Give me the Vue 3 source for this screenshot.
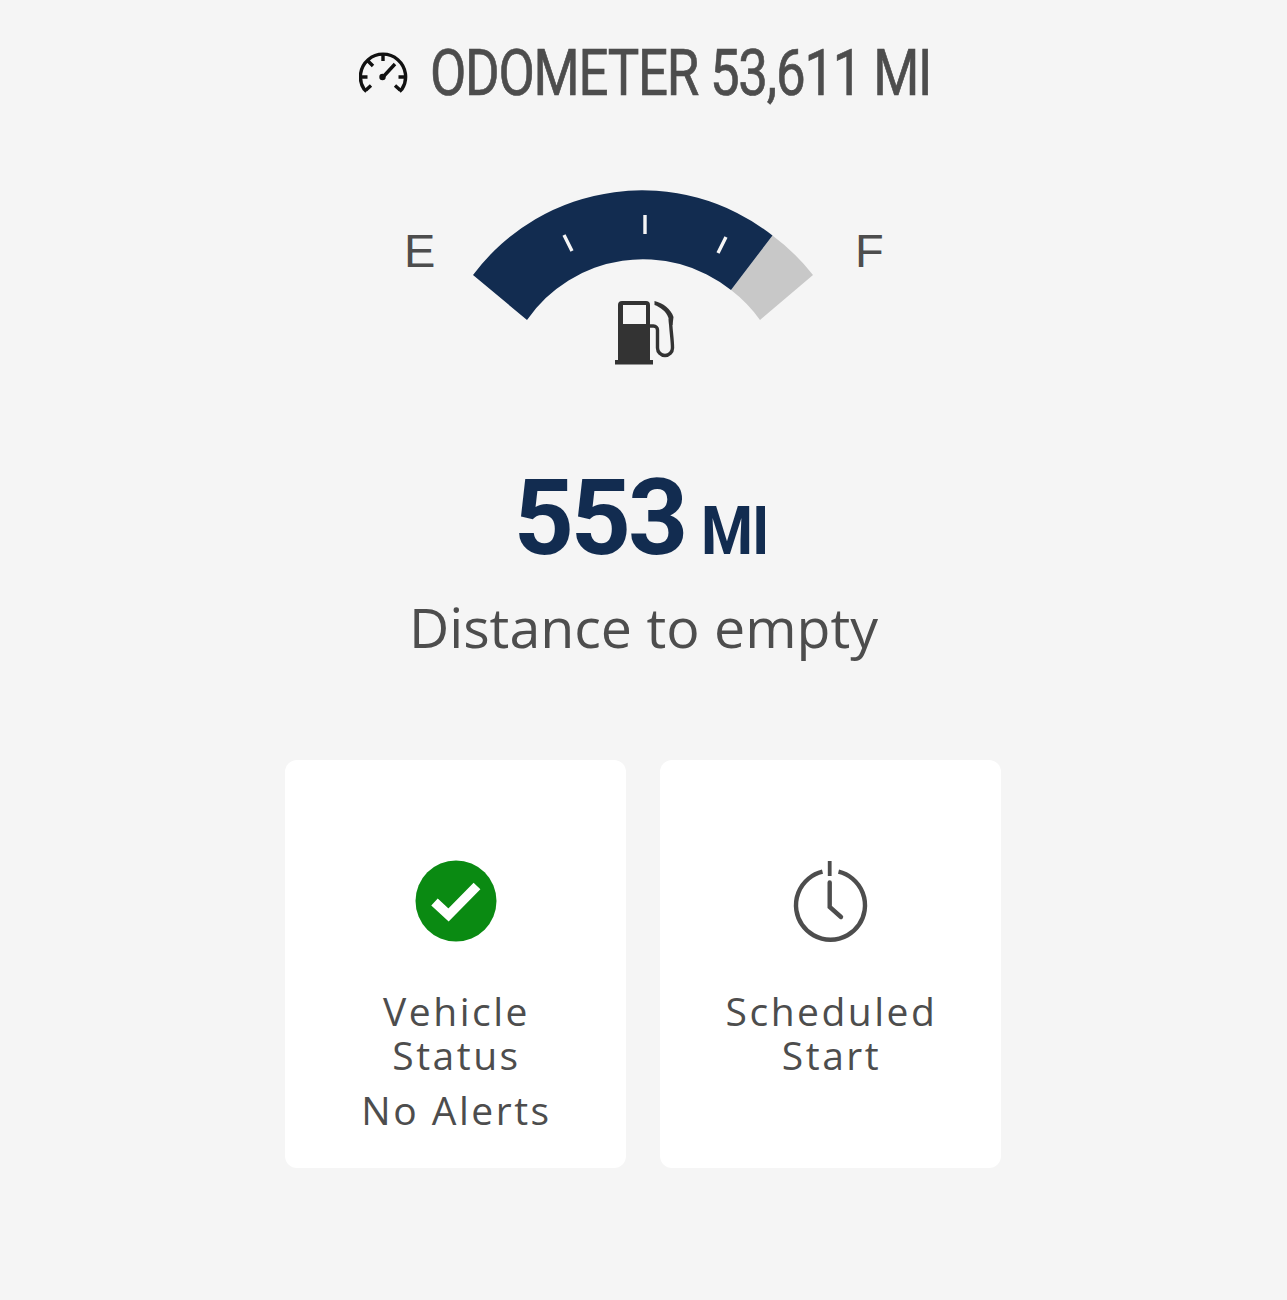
<template>
  <div class="page">
    <div class="odometer">
      <svg class="odo-icon" viewBox="1 0 50 44" width="50" height="44" fill="none" stroke="#111" stroke-width="3.4">
        <path d="M8.5 40.5 L6 38 A22.6 22.6 0 1 1 44 38 L41.5 40.5" stroke-linejoin="round" />
        <path d="M25 3v7M10 10l5 5M2.5 26h7M40.5 26h7M25 26L37 13" />
        <path d="M8 39l5-4.5M42 39l-5-4.5" />
        <circle cx="24.5" cy="26" r="3.2" fill="#111" stroke="none" />
      </svg>
      <span class="odo-text">ODOMETER 53,611 MI</span>
    </div>

    <div class="gauge-row">
      <span class="gauge-label left">E</span>
      <svg class="gauge" viewBox="0 0 340 176" width="340" height="176">
        <path d="M299.5 46.5 A211 211 0 0 1 340 86 L287 131 A141 141 0 0 0 258 101 Z" fill="#c8c8c8" />
        <path d="M0 86 A211 211 0 0 1 299.5 46.5 L258 101 A141 141 0 0 0 54 131 Z" fill="#122c50" />
        <path d="M172 26v19M91 46l8 16M253 48l-8 16" stroke="#f5f5f5" stroke-width="3.4" fill="none" />
        <!-- fuel pump -->
        <path fill="#333" fill-rule="evenodd" d="M149 112 H173 A4 4 0 0 1 177 116 V171 H180 V175.500 H142 V171 H145 V116 A4 4 0 0 1 149 112 Z M150 116 V135 H173 V116 Z" />
        <path d="M177 137 H180.500 A4 4 0 0 1 184.500 141 V159 A7.500 7.500 0 0 0 199.500 159 C199.500 150 197.500 140 197.500 130" fill="none" stroke="#333" stroke-width="3.400" />
        <path fill="#333" d="M181.500 112 C190 114 198 120 200.500 128 L199.500 136 H196 L195.500 129 C193 122 187 118 181.500 116 Z" />
      </svg>
      <span class="gauge-label right">F</span>
    </div>

    <div class="range">
      <span class="range-value">553</span>
      <span class="range-unit">MI</span>
    </div>
    <div class="range-caption">Distance to empty</div>

    <div class="cards">
      <div class="card">
        <svg class="card-icon" viewBox="0 0 82 82" width="82" height="82">
          <circle cx="41" cy="41" r="40.500" fill="#0a8a12" />
          <path d="M19.500 42l14 13L62 26" fill="none" stroke="#fff" stroke-width="9.500" />
        </svg>
        <div class="card-title">Vehicle<br />Status</div>
        <div class="card-status">No Alerts</div>
      </div>
      <div class="card">
        <svg class="card-icon" viewBox="0 0 82 82" width="82" height="82" fill="none" stroke="#4d4d4d">
          <path d="M32.500 11.700 A34.500 34.500 0 1 0 48.500 11.700" stroke-width="4.400" />
          <path d="M39.700 1v15" stroke-width="3.800" />
          <path d="M39.700 22.500v24.500L51 57" stroke-width="4.400" stroke-linecap="round" />
        </svg>
        <div class="card-title">Scheduled<br />Start</div>
      </div>
    </div>
  </div>
</template>

<script setup>
</script>

<style>
html,
body {
  background: #f5f5f5;
}
</style>

<style scoped>
.page {
  min-height: 1300px;
  background: #f5f5f5;
  display: flex;
  flex-direction: column;
  align-items: center;
  font-family: "Open Sans", "Liberation Sans", sans-serif;
  color: #4d4d4d;
  overflow: hidden;
}

.odometer {
  display: flex;
  align-items: center;
  gap: 21px;
  height: 80px;
  margin-top: 33px;
}

.odo-icon {
  flex: none;
}

.odo-text {
  display: block;
  width: 498px;
  margin-top: 2px;
  font-family: Roboto, sans-serif;
  font-size: 64px;
  line-height: 80px;
  white-space: nowrap;
  letter-spacing: -1.500px;
  -webkit-text-stroke: 0.700px #4d4d4d;
  transform: scaleX(0.825);
  transform-origin: left center;
}

.gauge-row {
  display: flex;
  margin-top: 76px;
}

.gauge-label {
  font-family: "Liberation Sans", sans-serif;
  font-size: 47px;
  line-height: 54px;
  margin-top: 35px;
  width: 28px;
}

.gauge-label.left {
  margin-right: 41px;
  text-align: right;
}

.gauge-label.right {
  margin-left: 42px;
}

.range {
  display: flex;
  align-items: baseline;
  gap: 16px;
  margin-top: 94px;
  height: 120px;
  color: #122c50;
  font-family: Roboto, sans-serif;
  font-weight: 700;
  line-height: 120px;
  transform: translateX(-2px);
}

.range-value {
  font-size: 105px;
  letter-spacing: -3px;
}

.range-unit {
  display: block;
  width: 68px;
  font-size: 66px;
  letter-spacing: -1px;
  transform: scaleX(0.9);
  transform-origin: left center;
}

.range-caption {
  font-size: 55.500px;
  line-height: 70px;
  margin-top: 13px;
}

.cards {
  display: flex;
  gap: 34px;
  margin-top: 98px;
  margin-right: 1px;
}

.card {
  width: 341px;
  height: 408px;
  box-sizing: border-box;
  background: #fff;
  border-radius: 12px;
  padding-top: 100px;
  padding-left: 2px;
  display: flex;
  flex-direction: column;
  align-items: center;
  text-align: center;
  font-size: 39px;
  line-height: 44px;
  letter-spacing: 2.500px;
}

.card-icon {
  flex: none;
  margin-left: -1px;
}

.card-title {
  margin-top: 47px;
}

.card-status {
  margin-top: 11px;
}
</style>
